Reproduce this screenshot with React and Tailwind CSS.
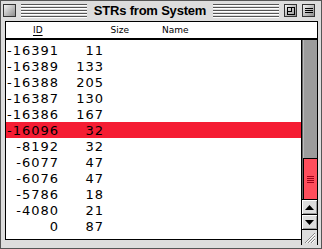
import React from 'react';

const rows = [
  ['-16391', '11'],
  ['-16389', '133'],
  ['-16388', '205'],
  ['-16387', '130'],
  ['-16386', '167'],
  ['-16096', '32'],
  ['-8192', '32'],
  ['-6077', '47'],
  ['-6076', '47'],
  ['-5786', '18'],
  ['-4080', '21'],
  ['0', '87'],
];

const Stripes = ({ className }) => (
  <div className={`flex flex-col gap-[1px] ${className}`}>
    {[0, 1, 2, 3, 4].map(i => (
      <div key={i} className="h-[1px] bg-[#555555] border-b border-white box-content" />
    ))}
  </div>
);

const BoxButton = ({ children }) => (
  <div className="w-[13px] h-[13px] border border-[#333333] bg-gradient-to-br from-[#f4f4f4] to-[#8f8f8f] flex items-center justify-center">
    {children}
  </div>
);

const Arrow = ({ up }) => (
  <div className="h-[15px] bg-[#dddddd] border-t border-black flex items-center justify-center shadow-[inset_1px_1px_0_#ffffff,inset_-1px_-1px_0_#999999]">
    <svg width="9" height="5" viewBox="0 0 9 5">
      <path d={up ? 'M0 5 L4.5 0 L9 5 Z' : 'M0 0 L9 0 L4.5 5 Z'} fill="#000" />
    </svg>
  </div>
);

export default function App() {
  return (
    <div className="w-[322px] h-[249px] bg-[#dddddd] border border-[#555555] flex flex-col font-['DejaVu_Sans',sans-serif] overflow-hidden">
      {/* title bar */}
      <div className="h-[19px] flex items-center pl-[2px] pr-[6px] gap-[5px]">
        <BoxButton />
        <Stripes className="flex-1" />
        <div className="font-['Liberation_Sans',sans-serif] font-bold text-[13px] tracking-[-0.2px] text-black leading-none px-[2px]">STRs from System</div>
        <Stripes className="flex-1" />
        <BoxButton>
          <div className="w-[8px] h-[8px] border border-black relative">
            <div className="absolute left-0 top-0 w-[4px] h-[4px] border-r border-b border-black" />
          </div>
        </BoxButton>
        <BoxButton>
          <div className="w-[8px] flex flex-col gap-[1px]">
            <div className="h-[1px] bg-black" />
            <div className="h-[1px] bg-black" />
            <div className="h-[1px] bg-black" />
          </div>
        </BoxButton>
      </div>

      {/* body */}
      <div className="flex-1 pl-[4px] pr-[3px] pt-[1px] flex flex-col">
        <div className="border-l border-t border-r border-black bg-white">
          <div className="h-[18px] border-b-2 border-black flex items-center text-[9px] text-black leading-none">
            <span className="ml-[27px] underline underline-offset-2">ID</span>
            <span className="ml-[68px]">Size</span>
            <span className="ml-[33px]">Name</span>
          </div>
        </div>
        <div className="flex items-start">
          <div className="flex-1 h-[200px] bg-white border-l border-b border-black pt-[2px]">
            {rows.map(([id, size], i) => (
              <div
                key={id}
                className={`h-[16px] flex items-center text-[13px] tracking-[1px] leading-none text-black ${i === 5 ? 'bg-[#f51d33]' : ''}`}
              >
                <span className="w-[53px] text-right">{id}</span>
                <span className="w-[45px] text-right">{size}</span>
              </div>
            ))}
          </div>
          <div className="w-[17px] h-[205px] border-l border-r border-black flex flex-col">
            <div className="flex-1 bg-[#9c9c9c] border-l border-[#666666] shadow-[inset_1px_0_0_#bbbbbb] flex flex-col justify-end">
              <div className="h-[41px] bg-[#ff4d5c] border-t border-black border-l border-[#cc2233] flex items-center justify-center">
                <div className="w-[7px] flex flex-col gap-[1px]">
                  <div className="h-[1px] bg-[#a00018]" />
                  <div className="h-[1px] bg-[#a00018]" />
                  <div className="h-[1px] bg-[#a00018]" />
                  <div className="h-[1px] bg-[#a00018]" />
                </div>
              </div>
            </div>
            <Arrow up />
            <Arrow />
            <div className="h-[16px] bg-[#dddddd] border-t border-black flex items-center justify-center">
              <svg width="12" height="12" viewBox="0 0 12 12">
                <path d="M1 11 L11 1 M4 11 L11 4 M7 11 L11 7" stroke="#888" strokeWidth="1" />
                <path d="M2 11 L11 2 M5 11 L11 5 M8 11 L11 8" stroke="#fff" strokeWidth="1" />
              </svg>
            </div>
          </div>
        </div>
      </div>
    </div>
  );
}
